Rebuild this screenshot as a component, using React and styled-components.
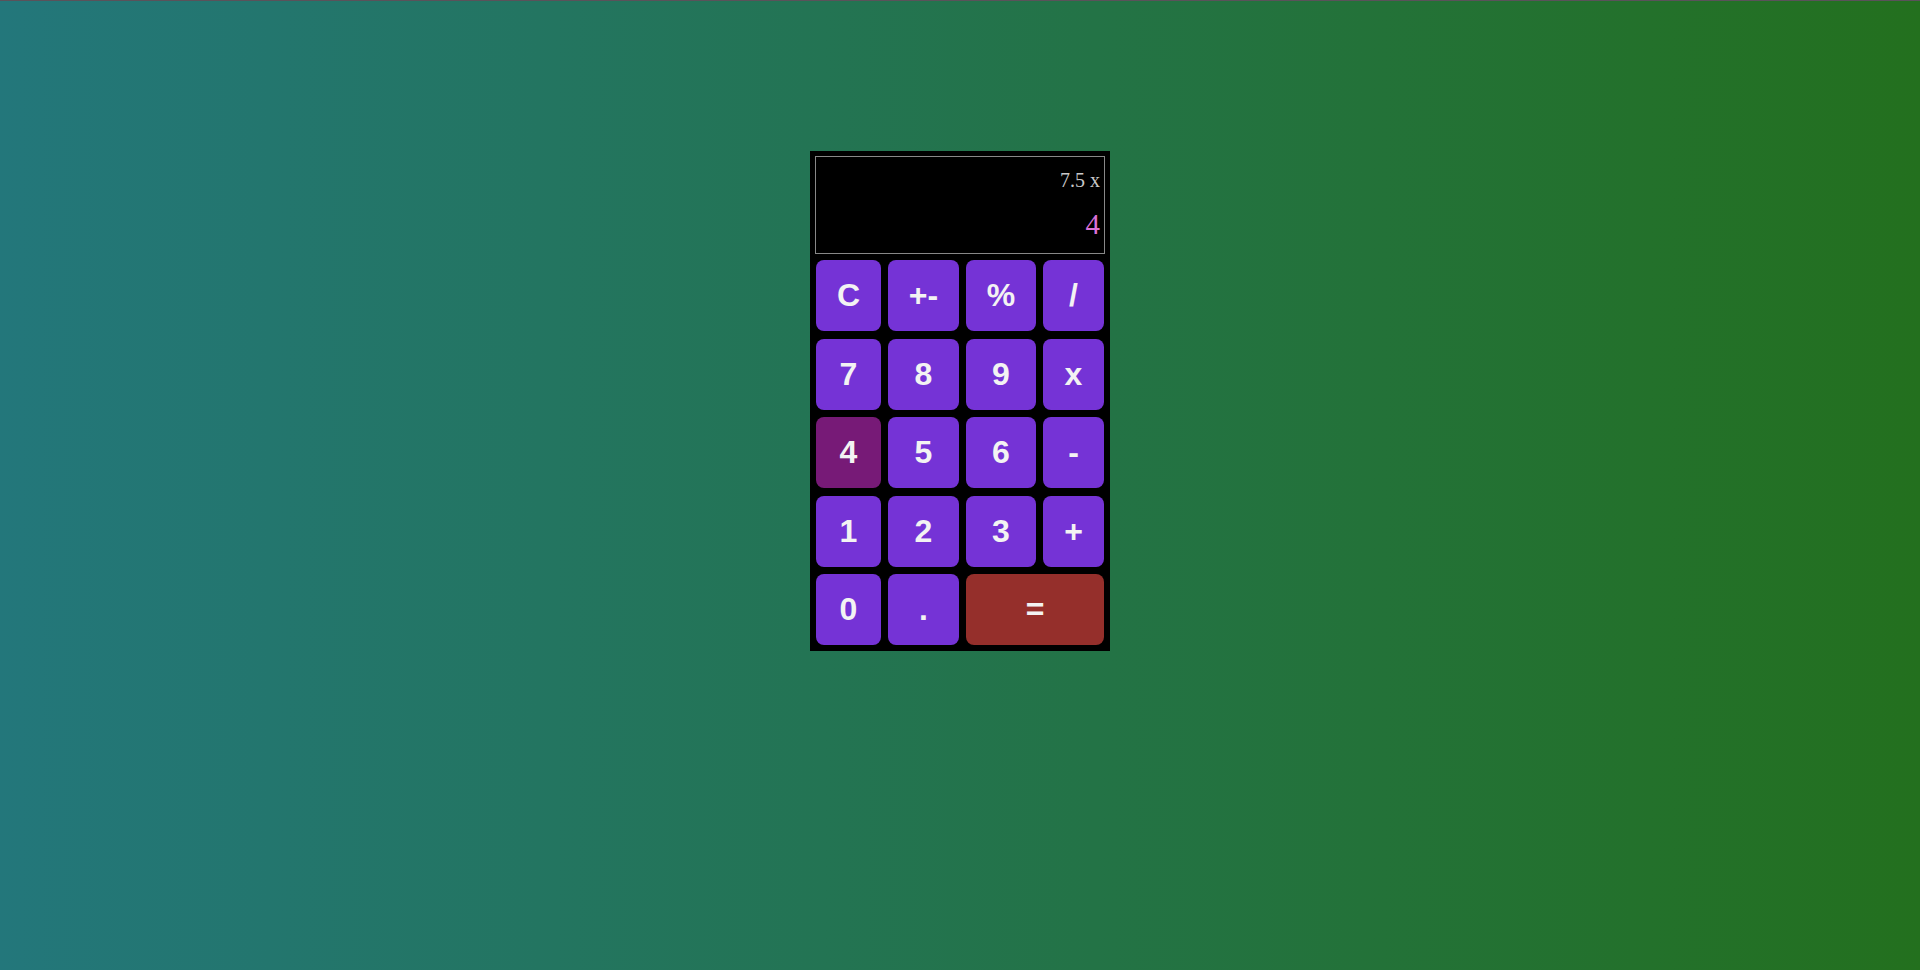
import React from "react";
import styled, { createGlobalStyle } from "styled-components";

const GlobalStyle = createGlobalStyle`
  html, body {
    margin: 0;
    padding: 0;
  }
  body {
    font-family: "Liberation Sans", Arial, sans-serif;
    background: linear-gradient(to right, #23777b, #23701e);
    min-height: 100vh;
  }
`;

const Page = styled.div`
  min-height: 970px;
  border-top: 1px solid #5a525a;
  box-sizing: border-box;
  padding-top: 150px;
  display: flex;
  justify-content: center;
  align-items: flex-start;
`;

const Calculator = styled.div`
  width: 300px;
  box-sizing: border-box;
  background: #000;
  padding: 5px 5px 6px 5px;
  display: flex;
  flex-direction: column;
  gap: 6px;
`;

const Display = styled.div`
  height: 98px;
  box-sizing: border-box;
  border: 1px solid #888;
  padding: 11px 4px 0 4px;
  display: flex;
  flex-direction: column;
  align-items: flex-end;
  font-family: "Liberation Serif", "Times New Roman", serif;
`;

const Previous = styled.div`
  font-size: 20px;
  line-height: 24px;
  color: #c9c9c9;
`;

const Current = styled.div`
  margin-top: 15px;
  font-size: 29px;
  line-height: 34px;
  color: #da70d6;
`;

const Keys = styled.div`
  margin: 0 1px;
  display: grid;
  grid-template-columns: 65px 71px 70px 61px;
  grid-auto-rows: 71px;
  column-gap: 7px;
  row-gap: 7.5px;
`;

const tones = {
  normal: "#7533d6",
  active: "#771a77",
  equals: "#952f2b",
};

const Key = styled.button`
  grid-column: span ${(p) => p.$span || 1};
  border: none;
  border-radius: 8px;
  background: ${(p) => tones[p.$tone || "normal"]};
  color: #f3f3f3;
  font-family: "Liberation Sans", Arial, sans-serif;
  font-weight: bold;
  font-size: 32px;
  padding: 0;
  display: flex;
  align-items: center;
  justify-content: center;
  cursor: pointer;
`;

const keys = [
  { label: "C" },
  { label: "+-" },
  { label: "%" },
  { label: "/" },
  { label: "7" },
  { label: "8" },
  { label: "9" },
  { label: "x" },
  { label: "4", tone: "active" },
  { label: "5" },
  { label: "6" },
  { label: "-" },
  { label: "1" },
  { label: "2" },
  { label: "3" },
  { label: "+" },
  { label: "0" },
  { label: "." },
  { label: "=", tone: "equals", span: 2 },
];

export default function App() {
  return (
    <>
      <GlobalStyle />
      <Page>
        <Calculator>
          <Display>
            <Previous>7.5 x</Previous>
            <Current>4</Current>
          </Display>
          <Keys>
            {keys.map((k) => (
              <Key key={k.label} $tone={k.tone} $span={k.span}>
                {k.label}
              </Key>
            ))}
          </Keys>
        </Calculator>
      </Page>
    </>
  );
}
